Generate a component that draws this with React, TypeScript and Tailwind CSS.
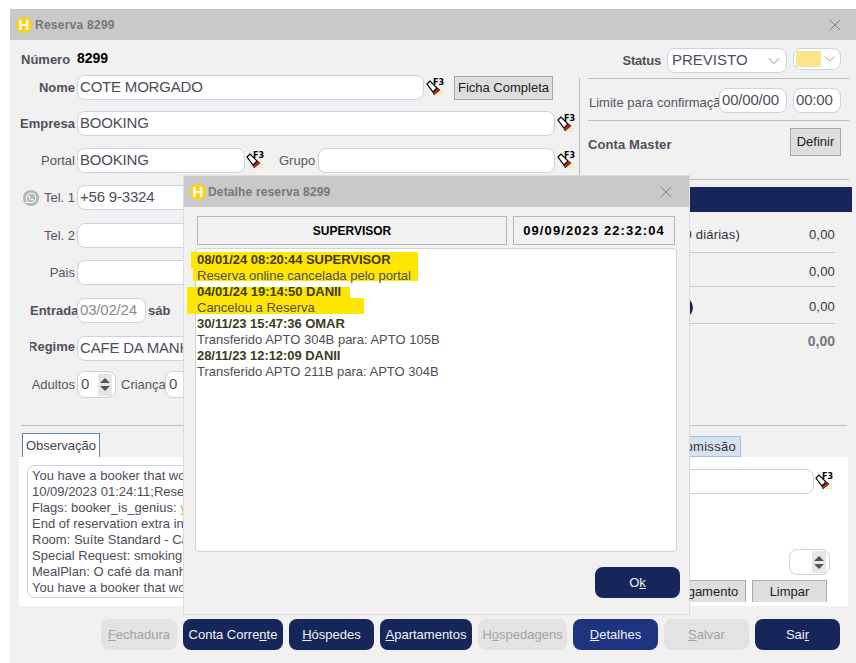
import type { ReactNode } from 'react';
import { ChevronDown, X } from 'lucide-react';
import { FaWhatsapp } from 'react-icons/fa';

const inputBox = 'rounded-lg border border-[#c8d4e4] bg-white text-[#4d4d58] overflow-hidden whitespace-nowrap';

function Logo() {
    return (
        <span className="relative flex h-[16px] w-[16px] shrink-0 items-center justify-center rounded-full bg-[#fbd40b] text-[15px] font-bold leading-none text-white">
            H
        </span>
    );
}

function F3Icon() {
    return (
        <svg width="20" height="20" viewBox="0 0 20 20" className="shrink-0">
            <path d="M1 6 L4 3 L11 10 L7 14 Z" fill="#fff" stroke="#000" strokeWidth="1.2" />
            <path d="M7 15 L12 10 L14 12 L8 17 Z" fill="#d2141c" stroke="#000" strokeWidth="0.5" />
            <path d="M10 16.5h8M12 14.5h6M14 12.5h4" stroke="#f0e640" strokeWidth="1" strokeDasharray="1 1" />
            <text x="7" y="7" fontSize="8" fontWeight="bold" fontFamily="'DejaVu Sans', sans-serif" fill="#000">
                F3
            </text>
        </svg>
    );
}

function Spinner() {
    return (
        <span className="flex h-[22px] w-[14px] shrink-0 flex-col items-center justify-center gap-[3px] bg-[#e6e6e6]">
            <span className="h-0 w-0 border-x-[5px] border-b-[5px] border-x-transparent border-b-[#555]" />
            <span className="h-0 w-0 border-x-[5px] border-t-[5px] border-x-transparent border-t-[#555]" />
        </span>
    );
}

function Field({ width, value, className = '' }: { width: string; value?: string; className?: string }) {
    return (
        <div className={`flex h-[25px] items-center px-[2px] text-[15px] tracking-[-0.2px] ${inputBox} ${width} ${className}`}>
            {value}
        </div>
    );
}

function Label({ children, bold }: { children: ReactNode; bold?: boolean }) {
    return (
        <div
            className={`flex w-[67px] shrink-0 justify-end overflow-hidden whitespace-nowrap pr-[2px] pt-[1px] text-[13px] ${
                bold ? 'font-bold text-[#50505a]' : 'text-[#555560]'
            }`}
        >
            {children}
        </div>
    );
}

function Row({ className, children }: { className: string; children: ReactNode }) {
    return <div className={`flex items-center ${className}`}>{children}</div>;
}

function NavButton({
    children,
    width,
    tone = 'navy',
}: {
    children: ReactNode;
    width: string;
    tone?: 'navy' | 'active' | 'off';
}) {
    const tones = {
        navy: 'bg-[#16265a] text-[#f2f2f2]',
        active: 'bg-[#1e3480] text-[#f2f2f2]',
        off: 'bg-[#e3e3e3] text-[#a3a3a3]',
    };
    return (
        <div className={`flex h-[31px] shrink-0 items-center justify-center rounded-lg text-[13px] ${width} ${tones[tone]}`}>
            {children}
        </div>
    );
}

function GrayButton({ children, className }: { children: ReactNode; className: string }) {
    return (
        <div
            className={`flex shrink-0 items-center justify-center border border-[#a9a9a9] bg-[#dedede] text-[13px] text-[#222] ${className}`}
        >
            {children}
        </div>
    );
}

function LeftForm() {
    return (
        <div className="w-[569px] shrink-0">
            <Row className="mt-[11px] h-[18px]">
                <div className="ml-[11px] w-[56px] text-[13px] font-bold text-[#50505a]">Número</div>
                <div className="-mt-[3px] text-[14px] font-bold text-black">8299</div>
            </Row>
            <Row className="mt-[6px] h-[25px]">
                <Label bold>Nome</Label>
                <Field width="w-[347px]" value="COTE MORGADO" />
                <div className="ml-[2px] w-[28px]">
                    <F3Icon />
                </div>
                <GrayButton className="h-[24px] w-[99px]">Ficha Completa</GrayButton>
            </Row>
            <Row className="mt-[11px] h-[25px]">
                <Label bold>Empresa</Label>
                <Field width="w-[478px]" value="BOOKING" />
                <div className="ml-[2px]">
                    <F3Icon />
                </div>
            </Row>
            <Row className="mt-[12px] h-[25px]">
                <Label>Portal</Label>
                <Field width="w-[168px]" value="BOOKING" />
                <div className="ml-[1px]">
                    <F3Icon />
                </div>
                <div className="ml-[13px] w-[39px] pt-[1px] text-[13px] text-[#555560]">Grupo</div>
                <Field width="w-[237px]" />
                <div className="ml-[2px]">
                    <F3Icon />
                </div>
            </Row>
            <Row className="mt-[12px] h-[25px]">
                <div className="relative flex w-[67px] shrink-0 items-center justify-end pr-[2px] pt-[1px] text-[13px] text-[#555560]">
                    <span className="mr-[5px] flex h-[16px] w-[16px] items-center justify-center rounded-full bg-[#b5b5b5] text-white">
                        <FaWhatsapp size={12} />
                    </span>
                    Tel. 1
                </div>
                <Field width="w-[240px]" value="+56 9-3324" />
            </Row>
            <Row className="mt-[13px] h-[25px]">
                <Label>Tel. 2</Label>
                <Field width="w-[240px]" />
            </Row>
            <Row className="mt-[12px] h-[25px]">
                <Label>Pais</Label>
                <Field width="w-[240px]" />
            </Row>
            <Row className="mt-[13px] h-[25px]">
                <div className="ml-[20px] w-[47px] shrink-0 overflow-hidden whitespace-nowrap text-[13px] font-bold text-[#50505a]">
                    Entrada
                </div>
                <Field width="w-[69px]" value="03/02/24" className="text-[#8b8b93]" />
                <div className="ml-[2px] text-[13px] font-bold text-[#50505a]">sáb</div>
            </Row>
            <Row className="mt-[13px] h-[25px]">
                <div className="-mt-[3px] flex w-[65px] shrink-0 justify-end">
                    <div className="flex w-[45px] justify-end overflow-hidden whitespace-nowrap text-[13px] font-bold text-[#50505a]">
                        Regime
                    </div>
                </div>
                <div className="w-[2px]" />
                <Field width="w-[240px]" value="CAFE DA MANHA" />
            </Row>
            <Row className="mt-[10px] h-[27px]">
                <Label>Adultos</Label>
                <div className={`flex h-[27px] w-[39px] items-center justify-between px-[3px] text-[15px] ${inputBox}`}>
                    0
                    <Spinner />
                </div>
                <div className="ml-[5px] w-[44px] whitespace-nowrap pt-[1px] text-[13px] text-[#555560]">Criança</div>
                <div className={`flex h-[27px] w-[40px] items-center px-[3px] text-[15px] ${inputBox}`}>0</div>
            </Row>
        </div>
    );
}

function SummaryRow({ className, children, value, strong }: { className: string; children?: ReactNode; value: string; strong?: boolean }) {
    return (
        <div className={`flex items-center justify-between border-[#c9c9c9] pl-[11px] ${className}`}>
            <div className="flex-1">{children}</div>
            <div className={strong ? 'text-[14px] font-bold text-[#77777f]' : 'text-[13px] tracking-[0.2px] text-[#33333b]'}>
                {value}
            </div>
        </div>
    );
}

function RightForm() {
    return (
        <div className="flex-1">
            <div className="mt-[8px] flex h-[25px] items-center justify-end pr-[15px]">
                <div className="mr-[6px] pt-[1px] text-[13px] font-bold tracking-[-0.2px] text-[#50505a]">Status</div>
                <div className={`flex h-[25px] w-[120px] items-center justify-between pl-[4px] pr-[2px] text-[15px] ${inputBox}`}>
                    PREVISTO
                    <ChevronDown size={20} strokeWidth={1} className="text-[#777]" />
                </div>
                <div className={`ml-[6px] flex h-[22px] w-[48px] items-center justify-between self-start pl-[2px] pr-[2px] ${inputBox}`}>
                    <span className="h-[16px] w-[26px] bg-[#fde48a]" />
                    <ChevronDown size={18} strokeWidth={1} className="text-[#777]" />
                </div>
            </div>
            <div className="mt-[5px] h-[109px] border-l border-[#bdbdbd] pl-[8px] pr-[7px]">
                <div className="mt-[2px] border-t border-[#bdbdbd]" />
                <div className="mt-[9px] flex h-[25px] items-center pr-[8px]">
                    <div className="ml-[1px] mt-[4px] w-[130px] overflow-hidden whitespace-nowrap text-[13px] text-[#555560]">
                        Limite para confirmação
                    </div>
                    <Field width="w-[68px]" value="00/00/00" />
                    <Field width="w-[48px]" value="00:00" className="ml-[6px]" />
                </div>
                <div className="mt-[7px] border-t border-[#bdbdbd]" />
                <div className="mt-[7px] flex h-[28px] items-center justify-between pr-[8px]">
                    <div className="mt-[5px] text-[13px] font-bold tracking-[0.1px] text-[#50505a]">Conta Master</div>
                    <GrayButton className="h-[28px] w-[51px]">Definir</GrayButton>
                </div>
                <div className="mt-[23px] border-t border-[#bdbdbd]" />
            </div>
            <div className="mr-[4px] h-[25px] bg-[#16265a]" />
            <div className="mr-[21px]">
                <SummaryRow className="h-[41px] border-b pt-[5px]" value="0,00">
                    <div className="w-[150px] whitespace-nowrap text-right text-[13px] tracking-[0.2px] text-[#33333b]">
                        (10 diárias)
                    </div>
                </SummaryRow>
                <SummaryRow className="h-[34px] border-b pt-[5px]" value="0,00" />
                <SummaryRow className="h-[37px] border-b pt-[4px]" value="0,00">
                    <div className="h-[21px] w-[103px] rounded-full bg-[#16265a]" />
                </SummaryRow>
                <SummaryRow className="h-[34px]" value="0,00" strong />
            </div>
        </div>
    );
}

function NotesPanel() {
    const lines: ReactNode[] = [
        'You have a booker that would',
        '10/09/2023 01:24:11;Reserva',
        <>
            Flags: booker_is_genius: <span className="text-[#e8a64a]">yes</span>
        </>,
        'End of reservation extra info',
        'Room: Suíte Standard - Casal',
        'Special Request: smoking pref',
        'MealPlan: O café da manhã',
        'You have a booker that would',
    ];
    return (
        <>
            <div className="mt-[8px] flex h-[23px] items-end pl-[12px] pr-[115px] text-[13px]">
                <div className="flex h-[24px] w-[78px] items-center justify-center border border-b-0 border-[#5f82a8] bg-white text-[#444]">
                    Observação
                </div>
                <div className="ml-auto flex h-[21px] w-[100px] items-center justify-end border border-[#a9c0da] bg-[#d6e2f0] pr-[4px] tracking-[0.3px] text-[#333]">
                    Comissão
                </div>
            </div>
            <div className="ml-[9px] mr-[8px] flex h-[149px] justify-between bg-white pl-[8px] pr-[13px] pt-[8px]">
                <div className="h-[133px] w-[400px] rounded-lg border border-[#c8d4e4] px-[4px] pt-[2px] text-[13px] leading-[16px] text-[#4d4d58]">
                    {lines.map((line, i) => (
                        <div key={i} className="whitespace-nowrap">
                            {line}
                        </div>
                    ))}
                </div>
                <div className="flex w-[300px] flex-col items-end pt-[4px]">
                    <div className="flex items-center">
                        <Field width="w-[280px]" />
                        <div className="ml-[1px]">
                            <F3Icon />
                        </div>
                    </div>
                    <div className="mr-[5px] mt-[55px] flex h-[26px] w-[41px] items-center justify-end rounded-lg border border-[#c8d4e4] pr-[3px]">
                        <Spinner />
                    </div>
                    <div className="mr-[8px] mt-[5px] flex gap-[6px]">
                        <GrayButton className="h-[22px] w-[82px] border-b-0">Pagamento</GrayButton>
                        <GrayButton className="h-[22px] w-[75px] border-b-0">Limpar</GrayButton>
                    </div>
                </div>
            </div>
        </>
    );
}

function LogEntry({ head, text }: { head: string; text: string }) {
    return (
        <>
            <div className="font-bold tracking-[-0.05px] text-[#3c3c22]">{head}</div>
            <div>{text}</div>
        </>
    );
}

function DetailDialog() {
    return (
        <div className="absolute left-[183px] top-[175px] h-[440px] w-[507px] border border-[#dcdcdc] bg-[#f1f1f1]">
            <div className="flex h-[31px] items-center justify-between bg-[#c9c9c9] pl-[6px] pr-[13px]">
                <div className="flex items-center gap-[2px] text-[12px] font-bold tracking-[0.15px] text-[#77777a]">
                    <Logo />
                    Detalhe reserva 8299
                </div>
                <X size={20} strokeWidth={1.1} className="text-[#777]" />
            </div>
            <div className="ml-[13px] mt-[9px] flex gap-[6px]">
                <div className="flex h-[29px] w-[310px] items-center justify-center border border-[#b5b5b5] text-[12px] font-bold text-black">
                    SUPERVISOR
                </div>
                <div className="flex h-[29px] w-[162px] items-center justify-center border border-[#b5b5b5] text-[13px] font-bold tracking-[1.1px] text-black">
                    09/09/2023 22:32:04
                </div>
            </div>
            <div className="relative ml-[11px] mt-[3px] h-[304px] w-[482px] rounded-sm border border-[#c8d4e4] bg-white pl-[1px]">
                <div className="absolute left-[-5px] top-[3px] h-[16px] w-[227px] bg-[#ffe600]" />
                <div className="absolute left-[-3px] top-[19px] h-[13px] w-[225px] bg-[#ffe600]" />
                <div className="absolute left-[-9px] top-[38px] h-[11px] w-[163px] bg-[#ffe600]" />
                <div className="absolute left-[-9px] top-[49px] h-[16px] w-[177px] bg-[#ffe600]" />
                <div className="relative pt-[3px] text-[13px] leading-[16px] text-[#4d4d58]">
                    <LogEntry head="08/01/24 08:20:44 SUPERVISOR" text="Reserva online cancelada pelo portal" />
                    <LogEntry head="04/01/24 19:14:50 DANII" text="Cancelou a Reserva" />
                    <LogEntry head="30/11/23 15:47:36 OMAR" text="Transferido APTO 304B para: APTO 105B" />
                    <LogEntry head="28/11/23 12:12:09 DANII" text="Transferido APTO 211B para: APTO 304B" />
                </div>
            </div>
            <div className="mr-[9px] mt-[15px] flex justify-end">
                <NavButton width="w-[85px]">
                    O<u>k</u>
                </NavButton>
            </div>
        </div>
    );
}

export default function App() {
    return (
        <div
            className="relative h-[663px] w-[856px] overflow-hidden bg-white pl-[10px] pt-[9px]"
            style={{ fontFamily: "'Liberation Sans', Arial, sans-serif" }}
        >
            <div className="h-[654px] w-[846px] bg-[#f1f1f1]">
                <div className="flex h-[31px] items-center justify-between bg-[#c9c9c9] pl-[6px] pr-[11px]">
                    <div className="flex items-center gap-[3px] text-[12px] font-bold tracking-[0.25px] text-[#77777a]">
                        <Logo />
                        Reserva 8299
                    </div>
                    <X size={20} strokeWidth={1.1} className="text-[#777]" />
                </div>
                <div className="flex h-[385px]">
                    <LeftForm />
                    <RightForm />
                </div>
                <div className="ml-[11px] mr-[9px] border-t border-[#bdbdbd]" />
                <NotesPanel />
                <div className="ml-[91px] mt-[13px] flex gap-[6px]">
                    <NavButton width="w-[76px]" tone="off">
                        <u>F</u>echadura
                    </NavButton>
                    <NavButton width="w-[100px]">
                        Conta Corre<u>n</u>te
                    </NavButton>
                    <NavButton width="w-[85px]">
                        <u>H</u>óspedes
                    </NavButton>
                    <NavButton width="w-[92px]">
                        <u>A</u>partamentos
                    </NavButton>
                    <NavButton width="w-[89px]" tone="off">
                        H<u>o</u>spedagens
                    </NavButton>
                    <NavButton width="w-[85px]" tone="active">
                        <u>D</u>etalhes
                    </NavButton>
                    <NavButton width="w-[85px]" tone="off">
                        <u>S</u>alvar
                    </NavButton>
                    <NavButton width="w-[85px]">
                        Sai<u>r</u>
                    </NavButton>
                </div>
            </div>
            <DetailDialog />
        </div>
    );
}
